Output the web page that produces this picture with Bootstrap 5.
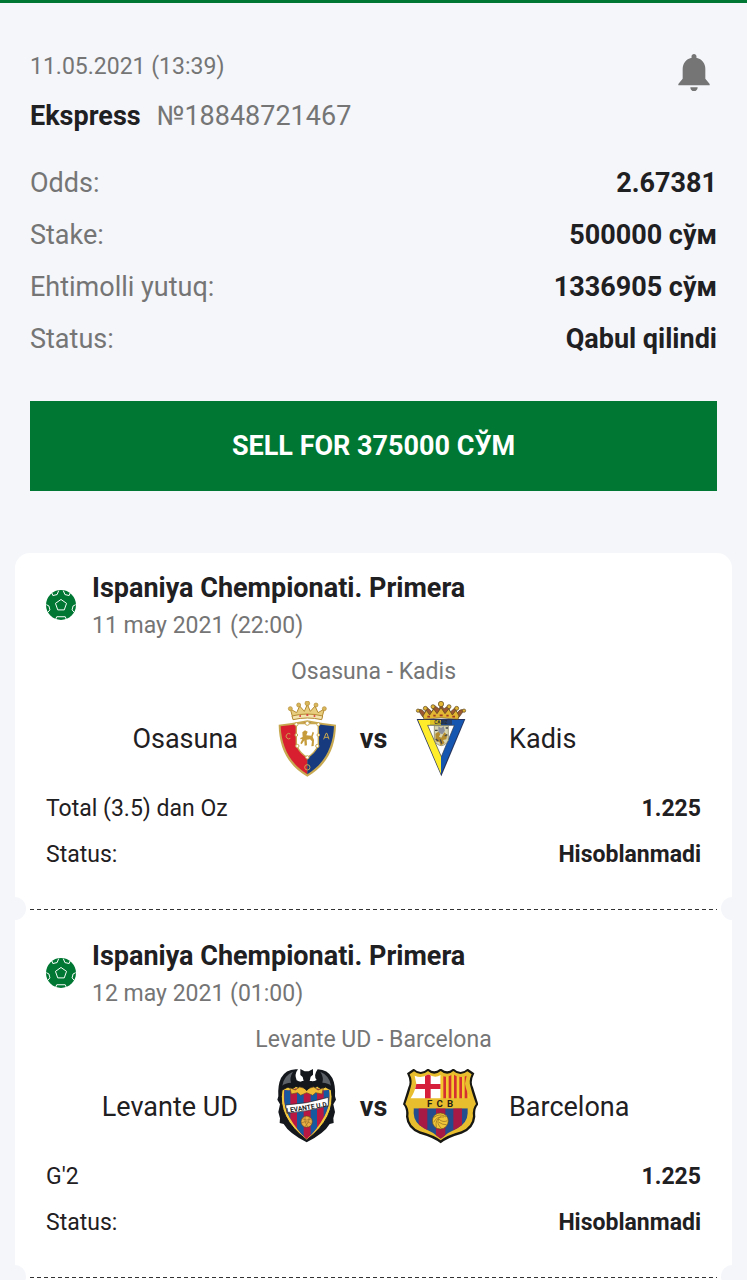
<!DOCTYPE html>
<html lang="uz">
<head>
<meta charset="utf-8">
<meta name="viewport" content="width=device-width, initial-scale=1">
<title>Ekspress №18848721467</title>
<link href="https://cdn.jsdelivr.net/npm/bootstrap@5.3.0/dist/css/bootstrap.min.css" rel="stylesheet">
<style>
  :root { --page: #f4f6fa; --brand: #007833; --ink: #1f2022; --muted: #757575; }
  body { background: var(--page); color: var(--ink); font-family: Roboto, "Noto Sans", sans-serif; font-size: 23px; line-height: 36px; }
  .screen { border-top: 3px solid var(--brand); }
  .soft { color: var(--muted); }
  .summary { padding: 46px 30px 0; }
  .large-text { font-size: 27px; }
  .ticket-no { padding-top: 13px; gap: 16px; }
  .figures { padding-top: 23px; }
  .figures > div { line-height: 52px; }
  .bell { margin: 5px 7px 0 0; }
  .sell { background: var(--brand); color: #fff; font-size: 27px; font-weight: 700; height: 90px; margin-top: 36px; }
  .sell:hover { background: #00652b; color: #fff; }
  .slip { background: #fff; border-radius: 15px; margin: 62px 15px 0; }
  .event { padding: 17px 31px 0; height: 356px; }
  .tear + .event { height: 368px; padding-top: 29px; }
  .event-head { gap: 16px; }
  .ball { margin-top: 20px; }
  .event-date { padding-top: 2px; }
  .match-name { padding-top: 10px; }
  .teams { padding: 11px 0 9px; font-size: 27px; }
  .team { flex: 1 1 0; }
  .team-home { padding-right: 31px; }
  .team-away { padding-left: 31px; }
  .versus { width: 57px; }
  .line { line-height: 46px; }
  .tear { position: relative; height: 0; margin: 0 15px; }
  .tear .dashes { display: block; width: 100%; height: 1px; background: repeating-linear-gradient(90deg, #333 0 4px, transparent 4px 7px); }
  .tear::before, .tear::after { content: ""; position: absolute; top: -12px; width: 23px; height: 23px; border-radius: 50%; background: var(--page); }
  .tear::before { left: -27px; }
  .tear::after { right: -27px; }
  .crest-text { font-family: Roboto, sans-serif; font-weight: 700; }
</style>
</head>
<body>
<svg width="0" height="0" class="position-absolute" aria-hidden="true">
  <symbol id="ball" viewBox="137 151 92 92">
    <circle cx="183" cy="197" r="46" fill="#007833"/>
    <g fill="none" stroke="#fff" stroke-width="3" stroke-linejoin="round">
      <path d="M183 180l17 12-7 20h-20l-7-20z"/>
      <path d="M155 160l3 8 13-3 5-12M211 160l-3 8-13-3-5-12M138 196l8 4 3 12-8 9M228 196l-8 4-3 12 8 9M167 240l3-7h26l3 7"/>
    </g>
  </symbol>
</svg>
<div class="screen vh-100 overflow-hidden">
  <header class="summary">
    <div class="d-flex justify-content-between align-items-start">
      <div>
        <div class="soft">11.05.2021 (13:39)</div>
        <div class="d-flex large-text ticket-no"><strong>Ekspress</strong><span class="soft">№18848721467</span></div>
      </div>
      <button class="btn p-0 border-0 bell lh-1" type="button" aria-label="Bildirishnomalar">
        <svg class="d-block" width="32" height="37" viewBox="53 41 96 111" fill="#757575"><path d="M94 52c-2-7 2-11 7-11s9 4 7 11c18 4 27 18 27 34v29l13 16v4H54v-4l13-16V86c0-16 9-30 27-34zM90 141h22c0 7-5 12-11 12s-11-5-11-12z"/></svg>
      </button>
    </div>
    <div class="figures large-text">
      <div class="d-flex justify-content-between"><span class="soft">Odds:</span><strong>2.67381</strong></div>
      <div class="d-flex justify-content-between"><span class="soft">Stake:</span><strong>500000 сўм</strong></div>
      <div class="d-flex justify-content-between"><span class="soft">Ehtimolli yutuq:</span><strong>1336905 сўм</strong></div>
      <div class="d-flex justify-content-between"><span class="soft">Status:</span><strong>Qabul qilindi</strong></div>
    </div>
    <button type="button" class="btn sell w-100 rounded-0 border-0">SELL FOR 375000 СЎМ</button>
  </header>

  <main class="slip">
    <section class="event">
      <div class="event-head d-flex align-items-start">
        <svg width="30" height="30" class="ball flex-shrink-0" aria-hidden="true"><use href="#ball"/></svg>
        <div>
          <div class="large-text fw-bold">Ispaniya Chempionati. Primera</div>
          <div class="event-date soft">11 may 2021 (22:00)</div>
        </div>
      </div>
      <div class="match-name text-center soft">Osasuna - Kadis</div>
      <div class="teams d-flex align-items-center">
        <div class="team team-home text-end">Osasuna</div>
        <svg width="76" height="76" viewBox="12 30 228 228" role="img" aria-label="Osasuna">
          <path d="M41 101q42-4 86-13 44 9 86 13c-1 69-28 123-86 156C69 224 42 170 41 101z" fill="#c8a951"/>
          <path d="M47 106q40-4 80-12v156C77 218 50 172 47 106z" fill="#d71f30"/>
          <path d="M207 106q-40-4-80-12v156c50-32 77-78 80-144z" fill="#163a7d"/>
          <path d="M94 98h66v65q-13 27-33 36-20-9-33-36z" fill="#fff" stroke="#c8a951" stroke-width="4"/>
          <g fill="#fff" stroke="#c8a951" stroke-width="3"><circle cx="94" cy="100" r="5"/><circle cx="127" cy="97" r="6"/><circle cx="160" cy="100" r="5"/><circle cx="94" cy="132" r="4"/><circle cx="160" cy="132" r="4"/><circle cx="97" cy="165" r="5"/><circle cx="157" cy="165" r="5"/><circle cx="127" cy="199" r="5"/></g>
          <path d="M112 124l8-6 8 4-4 11 15 1 4-12 4 3-4 12 4 10-1 18-7 1 2-15-6-6-10 1 1 17-7 1-1-16-8 12-4-3 6-13-6 1v-4l7-3z" fill="#c59b3b"/>
          <g fill="none" stroke="#c8a951" stroke-width="3"><path d="M76 129a8 8 0 1 0 0 13M176 145l7-18h3l6 18M179 139h11"/><circle cx="127" cy="229" r="8"/></g>
          <path d="M84 83l-8-29 19 11 9-20 14 16 9-21 9 21 14-16 9 20 19-11-8 29q-43-10-86 0z" fill="#e7cd7d" stroke="#b58b32" stroke-width="3"/>
          <path d="M81 75q46-12 92 0l-3 11q-43-10-86 0z" fill="#f2e3b1" stroke="#b58b32" stroke-width="3"/>
          <g fill="#d8b75b" stroke="#b58b32" stroke-width="2"><circle cx="76" cy="53" r="6"/><circle cx="101" cy="42" r="6"/><circle cx="127" cy="37" r="7"/><circle cx="153" cy="42" r="6"/><circle cx="178" cy="53" r="6"/></g>
          <path d="M103 75h5M146 75h5M124 72h6" stroke="#d71f30" stroke-width="4"/>
        </svg>
        <div class="versus text-center fw-bold">vs</div>
        <svg width="76" height="76" viewBox="36 30 228 228" role="img" aria-label="Kadis">
          <path d="M80 84h146l-72 172z" fill="#26335c"/>
          <path d="M84 87h69v162z" fill="#ffed2b"/>
          <path d="M222 87h-69v162z" fill="#1556b0"/>
          <path d="M113 103h80l-39 94z" fill="#fff" stroke="#303848" stroke-width="2"/>
          <path d="M133 104h42v44q-7 15-21 16-14-1-21-16z" fill="#d7d4b0" stroke="#76734f" stroke-width="2"/>
          <path d="M145 106l8 5 8-5 4 13-8 11-12-5z" fill="#8b909b"/>
          <path d="M136 128l9-6 6 7-4 8 7 3 9-16 9 8-3 13-10 2 5 9-12 8-4-11-11-2z" fill="#b38c30"/>
          <path d="M135 118h8M167 111h7M137 144l8 6M164 135l8-4M151 145l4 13" stroke="#42464b" stroke-width="4"/>
          <path d="M120 87h66v14h-66z" fill="#24406f"/><path d="M120 87h33v14h-33z" fill="#dec324"/>
          <text x="153" y="99" text-anchor="middle" font-size="14" class="crest-text" fill="#282f35">CADIZ</text>
          <path d="M84 57q12-6 20 8l8-15 14 12 8-18 14 10 5-18 8 18 13-9 7 18 13-12 8 15q9-15 20-8l-15 21q-54-10-108 0z" fill="#9b5731" stroke="#574320" stroke-width="2"/>
          <g fill="#e2b532" stroke="#574320" stroke-width="2"><circle cx="84" cy="59" r="5"/><circle cx="106" cy="52" r="6"/><circle cx="129" cy="47" r="6"/><circle cx="153" cy="39" r="8"/><circle cx="177" cy="47" r="6"/><circle cx="200" cy="52" r="6"/><circle cx="222" cy="59" r="5"/><path d="M99 75l10-17 10 14 12-18 10 14 12-18 12 18 11-14 11 18 11-14 9 17-3 10q-51-9-102 0z"/></g>
          <path d="M112 77h8M130 74h7M149 73h9M169 74h7M187 77h8" stroke="#9e3b25" stroke-width="5"/>
        </svg>
        <div class="team team-away">Kadis</div>
      </div>
      <div class="line d-flex justify-content-between"><span>Total (3.5) dan Oz</span><strong>1.225</strong></div>
      <div class="line d-flex justify-content-between"><span>Status:</span><strong>Hisoblanmadi</strong></div>
    </section>
    <div class="tear"><span class="dashes"></span></div>
    <section class="event">
      <div class="event-head d-flex align-items-start">
        <svg width="30" height="30" class="ball flex-shrink-0" aria-hidden="true"><use href="#ball"/></svg>
        <div>
          <div class="large-text fw-bold">Ispaniya Chempionati. Primera</div>
          <div class="event-date soft">12 may 2021 (01:00)</div>
        </div>
      </div>
      <div class="match-name text-center soft">Levante UD - Barcelona</div>
      <div class="teams d-flex align-items-center">
        <div class="team team-home text-end">Levante UD</div>
        <svg width="76" height="76" viewBox="12 30 228 228" role="img" aria-label="Levante UD">
          <defs><clipPath id="levante-field"><path d="M58 92q18 6 35-4 16 11 32 5 16 6 32-5 17 10 35 4 12 72-67 149Q46 164 58 92z"/></clipPath></defs>
          <path d="M92 31Q62 32 48 57 38 78 40 112l-3 10 8 14-5 23 5 19-1 14 12 3q15 27 69 55 54-28 69-55l12-3-1-14 5-19-5-23 8-14-3-10q2-34-8-55-14-25-44-26-14 19-3 32-9 6-21 3l3-13 7-6V30l-13 7h-12l-13-7v18l7 6 3 13q-12 3-21-3-8-18 4-33z" fill="#14171c"/>
          <path d="M52 80q4-30 32-42-11 18-6 33-18 1-26 9zM198 80q-4-30-32-42 11 18 6 33 18 1 26 9z" fill="#5c6067"/>
          <path d="M51 93l18-9 12 6 12-8 17 8h30l17-8 12 8 12-6 18 9q15 82-74 150-89-68-74-150z" fill="#f1c83b" stroke="#14171c" stroke-width="3"/>
          <g clip-path="url(#levante-field)"><path d="M45 85h160v170H45z" fill="#b91843"/><path d="M58 85h18v160H58zM96 85h20v160H96zM137 85h19v160h-19zM176 85h20v160h-20z" fill="#1759a0"/></g>
          <path d="M75 87l16 6 13-9 21 6 21-6 13 9 16-6-4 18-19-4-9 8-18-8-18 8-9-8-19 4z" fill="#f2bd35" stroke="#6d4c22" stroke-width="2"/>
          <path d="M109 66h32q-3 13-8 22l-8 8-8-8q-5-9-8-22z" fill="#14171c"/>
          <path d="M62 138q65-3 128-23v25q-62 18-124 23z" fill="#fff" stroke="#222" stroke-width="2"/>
          <text x="127" y="152" text-anchor="middle" font-size="20" class="crest-text" fill="#222" transform="rotate(-9 127 145)">LEVANTE U.D.</text>
          <circle cx="125" cy="188" r="17" fill="#e9af43" stroke="#61451d" stroke-width="2"/>
          <path d="M111 179q14 8 28 1M110 192q15-9 30 3M120 172q-4 16 8 32M133 173q2 17-13 30" fill="none" stroke="#986c28" stroke-width="2"/>
        </svg>
        <div class="versus text-center fw-bold">vs</div>
        <svg width="76" height="76" viewBox="36 30 228 228" role="img" aria-label="Barcelona">
          <defs><clipPath id="barca-field"><path d="M74 50q22 9 41-4 20 13 37 2 17 11 37-2 19 13 41 4l-5 24q4 24 18 45-12 18-10 44-1 29-31 45-28 12-50 31-22-19-50-31-30-16-31-45 3-26-10-44 14-21 18-45z"/></clipPath></defs>
          <path d="M71 29q22 21 43-1 18 18 38 0 20 18 38 0 21 22 43 1l20 14q-13 25-4 42 6 20 16 51-12 12-9 37-3 36-41 51-43 12-63 29-20-17-63-29-38-15-41-51 3-25-9-37 10-31 16-51 9-17-4-42z" fill="#171713"/>
          <path d="M72 37q21 17 42-1 18 17 38 0 20 17 38 0 21 18 42 1l13 9q-10 20-3 39 5 20 16 50-12 13-9 37-2 32-35 45-43 12-62 27-19-15-62-27-33-13-35-45 3-24-9-37 11-30 16-50 7-19-3-39z" fill="#e9be2e"/>
          <g clip-path="url(#barca-field)">
            <path d="M55 40h97v80H55z" fill="#fff"/><path d="M105 40h17v80h-17zM55 75h97v15H55z" fill="#d51f3b"/>
            <path d="M152 40h94v80h-94z" fill="#f4c92f"/><path d="M160 40h8v80h-8zM176 40h8v80h-8zM192 40h8v80h-8zM208 40h8v80h-8zM224 40h8v80h-8z" fill="#d43032"/>
            <path d="M50 148h205v100H50z" fill="#234d8d"/><path d="M86 148h26v100H86zM138 148h28v100h-28zM190 148h26v100h-26z" fill="#a71a46"/>
          </g>
          <path d="M60 118h185l10 18-8 12H58l-8-12z" fill="#e9be2e"/>
          <g class="crest-text" font-size="29" text-anchor="middle" fill="#252113"><text x="119" y="143">F</text><text x="149" y="143">C</text><text x="180" y="143">B</text></g>
          <circle cx="151" cy="186" r="24" fill="#f0c537" stroke="#66501d" stroke-width="2"/>
          <path d="M132 175q18-14 36-1M131 190q9-19 31-16M139 204q-5-22 14-31M154 208q-15-14-8-28 13 12 26 5M147 190q11 8 23 7" fill="none" stroke="#8b6a22" stroke-width="2"/>
        </svg>
        <div class="team team-away">Barcelona</div>
      </div>
      <div class="line d-flex justify-content-between"><span>G'2</span><strong>1.225</strong></div>
      <div class="line d-flex justify-content-between"><span>Status:</span><strong>Hisoblanmadi</strong></div>
    </section>
    <div class="tear"><span class="dashes"></span></div>
    <section class="event"></section>
  </main>
</div>
<script src="https://cdn.jsdelivr.net/npm/bootstrap@5.3.0/dist/js/bootstrap.bundle.min.js"></script>
</body>
</html>
